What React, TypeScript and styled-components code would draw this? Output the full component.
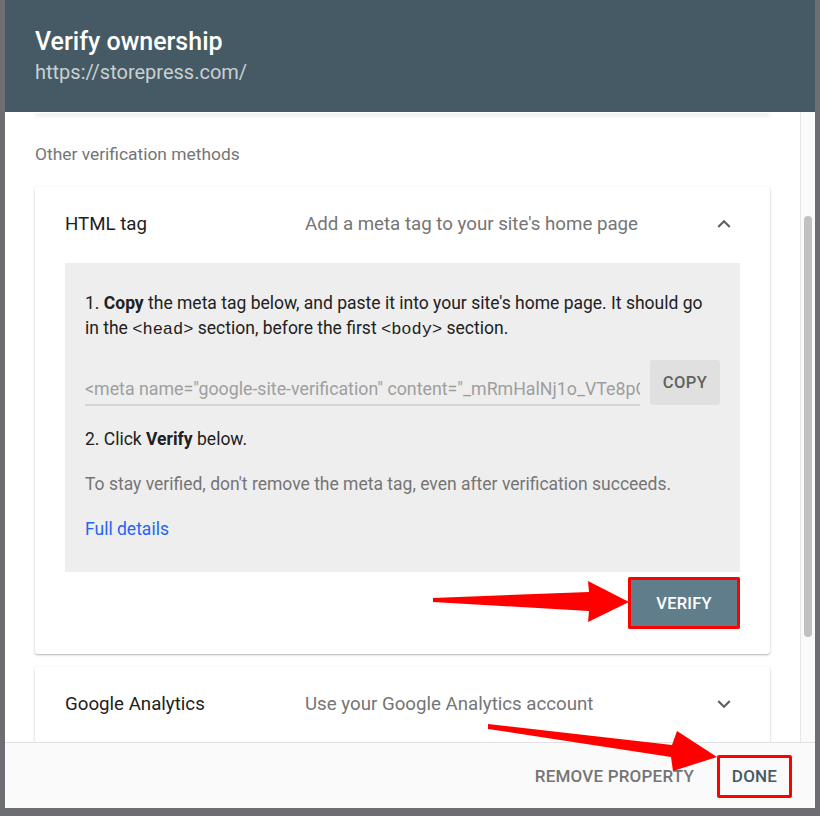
import * as React from 'react';
import styled, { createGlobalStyle } from 'styled-components';

const GlobalStyle = createGlobalStyle`
  html, body {
    margin: 0;
    padding: 0;
    background: #6d6e71;
  }
  body {
    font-family: Roboto, 'Noto Sans', Arial, sans-serif;
    -webkit-font-smoothing: antialiased;
  }
  * {
    box-sizing: border-box;
  }
`;

const Stage = styled.div`
  position: relative;
  width: 820px;
  height: 816px;
  padding: 0 5px 8px 5px;
`;

const Dialog = styled.div`
  height: 808px;
  display: flex;
  flex-direction: column;
  background: #fff;
  overflow: hidden;
`;

const Header = styled.div`
  flex: 0 0 112px;
  background: #455a64;
  padding: 28px 30px 0;
`;

const Title = styled.div`
  font-size: 25px;
  line-height: 28px;
  font-weight: 500;
  color: #fff;
`;

const Subtitle = styled.div`
  margin-top: 4px;
  font-size: 20px;
  line-height: 24px;
  color: rgba(255, 255, 255, 0.72);
`;

const Body = styled.div`
  flex: 1;
  min-height: 0;
  display: flex;
`;

const ScrollArea = styled.div`
  flex: 1;
  overflow: hidden;
`;

const ScrollTrack = styled.div`
  flex: 0 0 15px;
  background: #fafafa;
  border-left: 1px solid #e6e6e6;
  padding: 104px 0 0 3px;
`;

const ScrollThumb = styled.div`
  width: 8px;
  height: 421px;
  border-radius: 4px;
  background: #c1c1c1;
`;

const PrevCardEdge = styled.div`
  height: 1px;
  margin: 0 30px;
  background: #fff;
  box-shadow: 0 2px 4px rgba(0, 0, 0, 0.3);
`;

const SectionLabel = styled.div`
  margin: 29px 30px 0;
  font-size: 17.4px;
  line-height: 24px;
  color: #757575;
`;

const Card = styled.div<{ $gap: number }>`
  margin: ${p => p.$gap}px 30px 0;
  background: #fff;
  border-radius: 3px;
  box-shadow: 0 1px 3px rgba(0, 0, 0, 0.2), 0 1px 1px rgba(0, 0, 0, 0.12);
`;

const CardHeader = styled.div`
  height: 76px;
  display: flex;
  align-items: center;
  padding: 0 33px 2px 30px;
`;

const MethodName = styled.div`
  flex: 0 0 240px;
  font-size: 18.7px;
  color: #212121;
`;

const MethodDesc = styled.div`
  flex: 1;
  font-size: 18.7px;
  color: #757575;
`;

const Chevron = styled.svg`
  width: 26px;
  height: 26px;
  fill: #616161;
`;

const Instructions = styled.div`
  margin: 0 30px;
  background: #eeeeee;
  padding: 28px 20px 30px;
  font-size: 17.5px;
  line-height: 25px;
  color: #212121;
`;

const Step = styled.p<{ $muted?: boolean }>`
  margin: 0;
  color: ${p => (p.$muted ? '#757575' : '#212121')};
`;

const Strong = styled.strong`
  font-weight: 700;
`;

const Code = styled.code`
  font-family: 'Liberation Mono', 'DejaVu Sans Mono', monospace;
  font-size: 17px;
`;

const TagRow = styled.div`
  margin: 18px 0 20px;
  display: flex;
  align-items: center;
  gap: 10px;
`;

const TagInput = styled.input`
  flex: 1;
  min-width: 0;
  height: 44px;
  padding: 12px 0 0;
  border: none;
  border-bottom: 2px solid #d5d5d5;
  background: transparent;
  font-family: inherit;
  font-size: 17.8px;
  color: #9e9e9e;
  outline: none;
`;

const CopyButton = styled.button`
  flex: 0 0 70px;
  height: 45px;
  border: none;
  border-radius: 3px;
  background: #e0e0e0;
  font-family: inherit;
  font-size: 16.5px;
  font-weight: 500;
  letter-spacing: 0.5px;
  color: #616161;
  margin-bottom: 2px;
`;

const Spacer = styled.div`
  height: 20px;
`;

const DetailsLink = styled.a`
  color: #2465f5;
  text-decoration: none;
`;

const CardActions = styled.div`
  display: flex;
  justify-content: flex-end;
  padding: 5px 30px 25px;
`;

const FlatButton = styled.button<{ $tone: 'primary' | 'muted' | 'filled'; $mark?: boolean }>`
  border: none;
  border-radius: 2px;
  font-family: inherit;
  font-size: 17px;
  font-weight: 500;
  letter-spacing: 0.2px;
  background: ${p => (p.$tone === 'filled' ? '#607d8b' : 'transparent')};
  color: ${p => (p.$tone === 'filled' ? '#fff' : p.$tone === 'primary' ? '#455a64' : '#757575')};
  outline: ${p => (p.$mark ? '3px solid #ff0000' : 'none')};
  outline-offset: -3px;
`;

const VerifyButton = styled(FlatButton)`
  width: 112px;
  height: 52px;
  font-size: 16.5px;
`;

const Footer = styled.div`
  flex: 0 0 66px;
  display: flex;
  align-items: center;
  justify-content: flex-end;
  gap: 15px;
  padding: 0 23px 0 0;
  background: #fafafa;
  border-top: 1px solid #e0e0e0;
`;

const FooterButton = styled(FlatButton)`
  height: 43px;
  padding: 0 8px;
  margin-top: 1px;
`;

const DoneButton = styled(FooterButton)`
  width: 75px;
`;

const Annotations = styled.svg`
  position: absolute;
  left: 0;
  top: 0;
  width: 820px;
  height: 816px;
  pointer-events: none;
`;

function ExpandIcon({ open }: { open: boolean }) {
  return (
    <Chevron viewBox="0 0 24 24">
      {open
        ? <path d="M7.41 15.41L12 10.83l4.59 4.58L18 14l-6-6-6 6z" />
        : <path d="M7.41 8.59L12 13.17l4.59-4.58L18 10l-6 6-6-6 1.41-1.41z" />}
    </Chevron>
  );
}

const metaTag = '<meta name="google-site-verification" content="_mRmHalNj1o_VTe8pQxW3kLz9YbCfD2sR7uNvA4hJ" />';

export default function App() {
  return (
    <Stage>
      <GlobalStyle />
      <Dialog>
        <Header>
          <Title>Verify ownership</Title>
          <Subtitle>https://storepress.com/</Subtitle>
        </Header>
        <Body>
          <ScrollArea>
            <PrevCardEdge />
            <SectionLabel>Other verification methods</SectionLabel>
            <Card $gap={21}>
              <CardHeader>
                <MethodName>HTML tag</MethodName>
                <MethodDesc>Add a meta tag to your site's home page</MethodDesc>
                <ExpandIcon open />
              </CardHeader>
              <Instructions>
                <Step>
                  1. <Strong>Copy</Strong> the meta tag below, and paste it into your site's home page. It should go
                  in the <Code>&lt;head&gt;</Code> section, before the first <Code>&lt;body&gt;</Code> section.
                </Step>
                <TagRow>
                  <TagInput readOnly value={metaTag} />
                  <CopyButton>COPY</CopyButton>
                </TagRow>
                <Step>2. Click <Strong>Verify</Strong> below.</Step>
                <Spacer />
                <Step $muted>To stay verified, don't remove the meta tag, even after verification succeeds.</Step>
                <Spacer />
                <Step><DetailsLink href="#">Full details</DetailsLink></Step>
              </Instructions>
              <CardActions>
                <VerifyButton $tone="filled" $mark>VERIFY</VerifyButton>
              </CardActions>
            </Card>
            <Card $gap={13}>
              <CardHeader>
                <MethodName>Google Analytics</MethodName>
                <MethodDesc>Use your Google Analytics account</MethodDesc>
                <ExpandIcon open={false} />
              </CardHeader>
            </Card>
          </ScrollArea>
          <ScrollTrack>
            <ScrollThumb />
          </ScrollTrack>
        </Body>
        <Footer>
          <FooterButton $tone="muted">REMOVE PROPERTY</FooterButton>
          <DoneButton $tone="primary" $mark>DONE</DoneButton>
        </Footer>
      </Dialog>
      <Annotations viewBox="0 0 820 816">
        <polygon
          fill="#ff0000"
          points="433,598 589,592 588,581 629,602 588,622 589,611 433,602"
        />
        <polygon
          fill="#ff0000"
          points="488,724 672,745 677,731 717,757 673,771 671,757 488,729"
        />
      </Annotations>
    </Stage>
  );
}
